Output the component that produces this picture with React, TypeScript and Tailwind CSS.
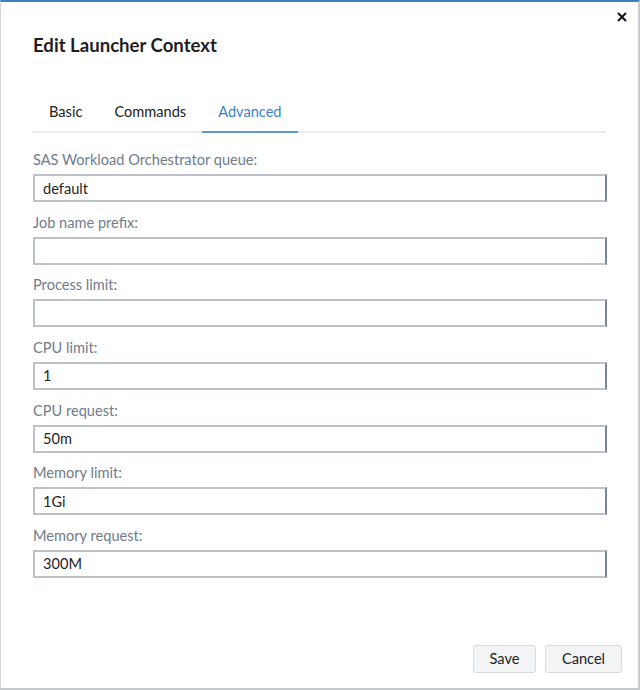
import React, { useState } from "react";

const fields = [
  { label: "SAS Workload Orchestrator queue:", value: "default" },
  { label: "Job name prefix:", value: "" },
  { label: "Process limit:", value: "" },
  { label: "CPU limit:", value: "1" },
  { label: "CPU request:", value: "50m" },
  { label: "Memory limit:", value: "1Gi" },
  { label: "Memory request:", value: "300M" },
];

const tabs = ["Basic", "Commands", "Advanced"];

const App: React.FC = () => {
  const [activeTab, setActiveTab] = useState("Advanced");
  const [values, setValues] = useState(fields.map((f) => f.value));

  return (
    <div
      className="w-[640px] h-[690px] bg-white text-[#1f1f1f] flex flex-col border-t-2 border-t-[#3e7fc2] border-l border-l-[#d4d7dc] border-r-2 border-r-[#c9ccd1] border-b-2 border-b-[#c5c8cd]"
      style={{ fontFamily: "Lato, 'Noto Sans', sans-serif" }}
    >
      <div className="relative px-[32px]">
        <button className="absolute right-[10px] top-[9px] w-[12px] h-[12px] flex items-center justify-center">
          <svg width="10" height="10" viewBox="0 0 10 10">
            <path d="M1 1 L9 9 M9 1 L1 9" stroke="#111" strokeWidth="2" />
          </svg>
        </button>
        <h1 className="pt-[32px] text-[18.6px] leading-[22px] font-bold">Edit Launcher Context</h1>

        <div className="mt-[37px] flex border-b-2 border-[#ececec]">
          {tabs.map((t) => (
            <button
              key={t}
              onClick={() => setActiveTab(t)}
              className={
                t === activeTab
                  ? "px-4 pt-[9px] pb-[9px] -mb-[2px] border-b-2 border-[#5b9bd5] text-[14.6px] leading-[20px] text-[#3a82c6]"
                  : "px-4 pt-[9px] pb-[9px] -mb-[2px] border-b-2 border-transparent text-[14.6px] leading-[20px] text-[#222]"
              }
            >
              {t}
            </button>
          ))}
        </div>

        <div className="pt-[17px]">
          {fields.map((f, i) => (
            <div key={f.label} className="mb-[10.67px]">
              <label className="block text-[14.6px] leading-[20px] text-[#727b8c]">{f.label}</label>
              <input
                type="text"
                value={values[i]}
                onChange={(e) => {
                  const next = [...values];
                  next[i] = e.target.value;
                  setValues(next);
                }}
                className="mt-[4px] w-[574px] h-[28px] px-[8px] text-[14.6px] text-[#1f1f1f] border-2 border-[#bcc1cb] border-r-[#7b869a] outline-none"
              />
            </div>
          ))}
        </div>
      </div>

      <div className="mt-auto flex justify-end gap-[9px] pr-[16px] pb-[15px]">
        <button className="w-[63px] h-[28px] rounded-[3px] border border-[#d7dadf] bg-[#f3f4f6] text-[14.6px] text-[#222]">
          Save
        </button>
        <button className="w-[77px] h-[28px] rounded-[3px] border border-[#d7dadf] bg-[#f3f4f6] text-[14.6px] text-[#222]">
          Cancel
        </button>
      </div>
    </div>
  );
};

export default App;
